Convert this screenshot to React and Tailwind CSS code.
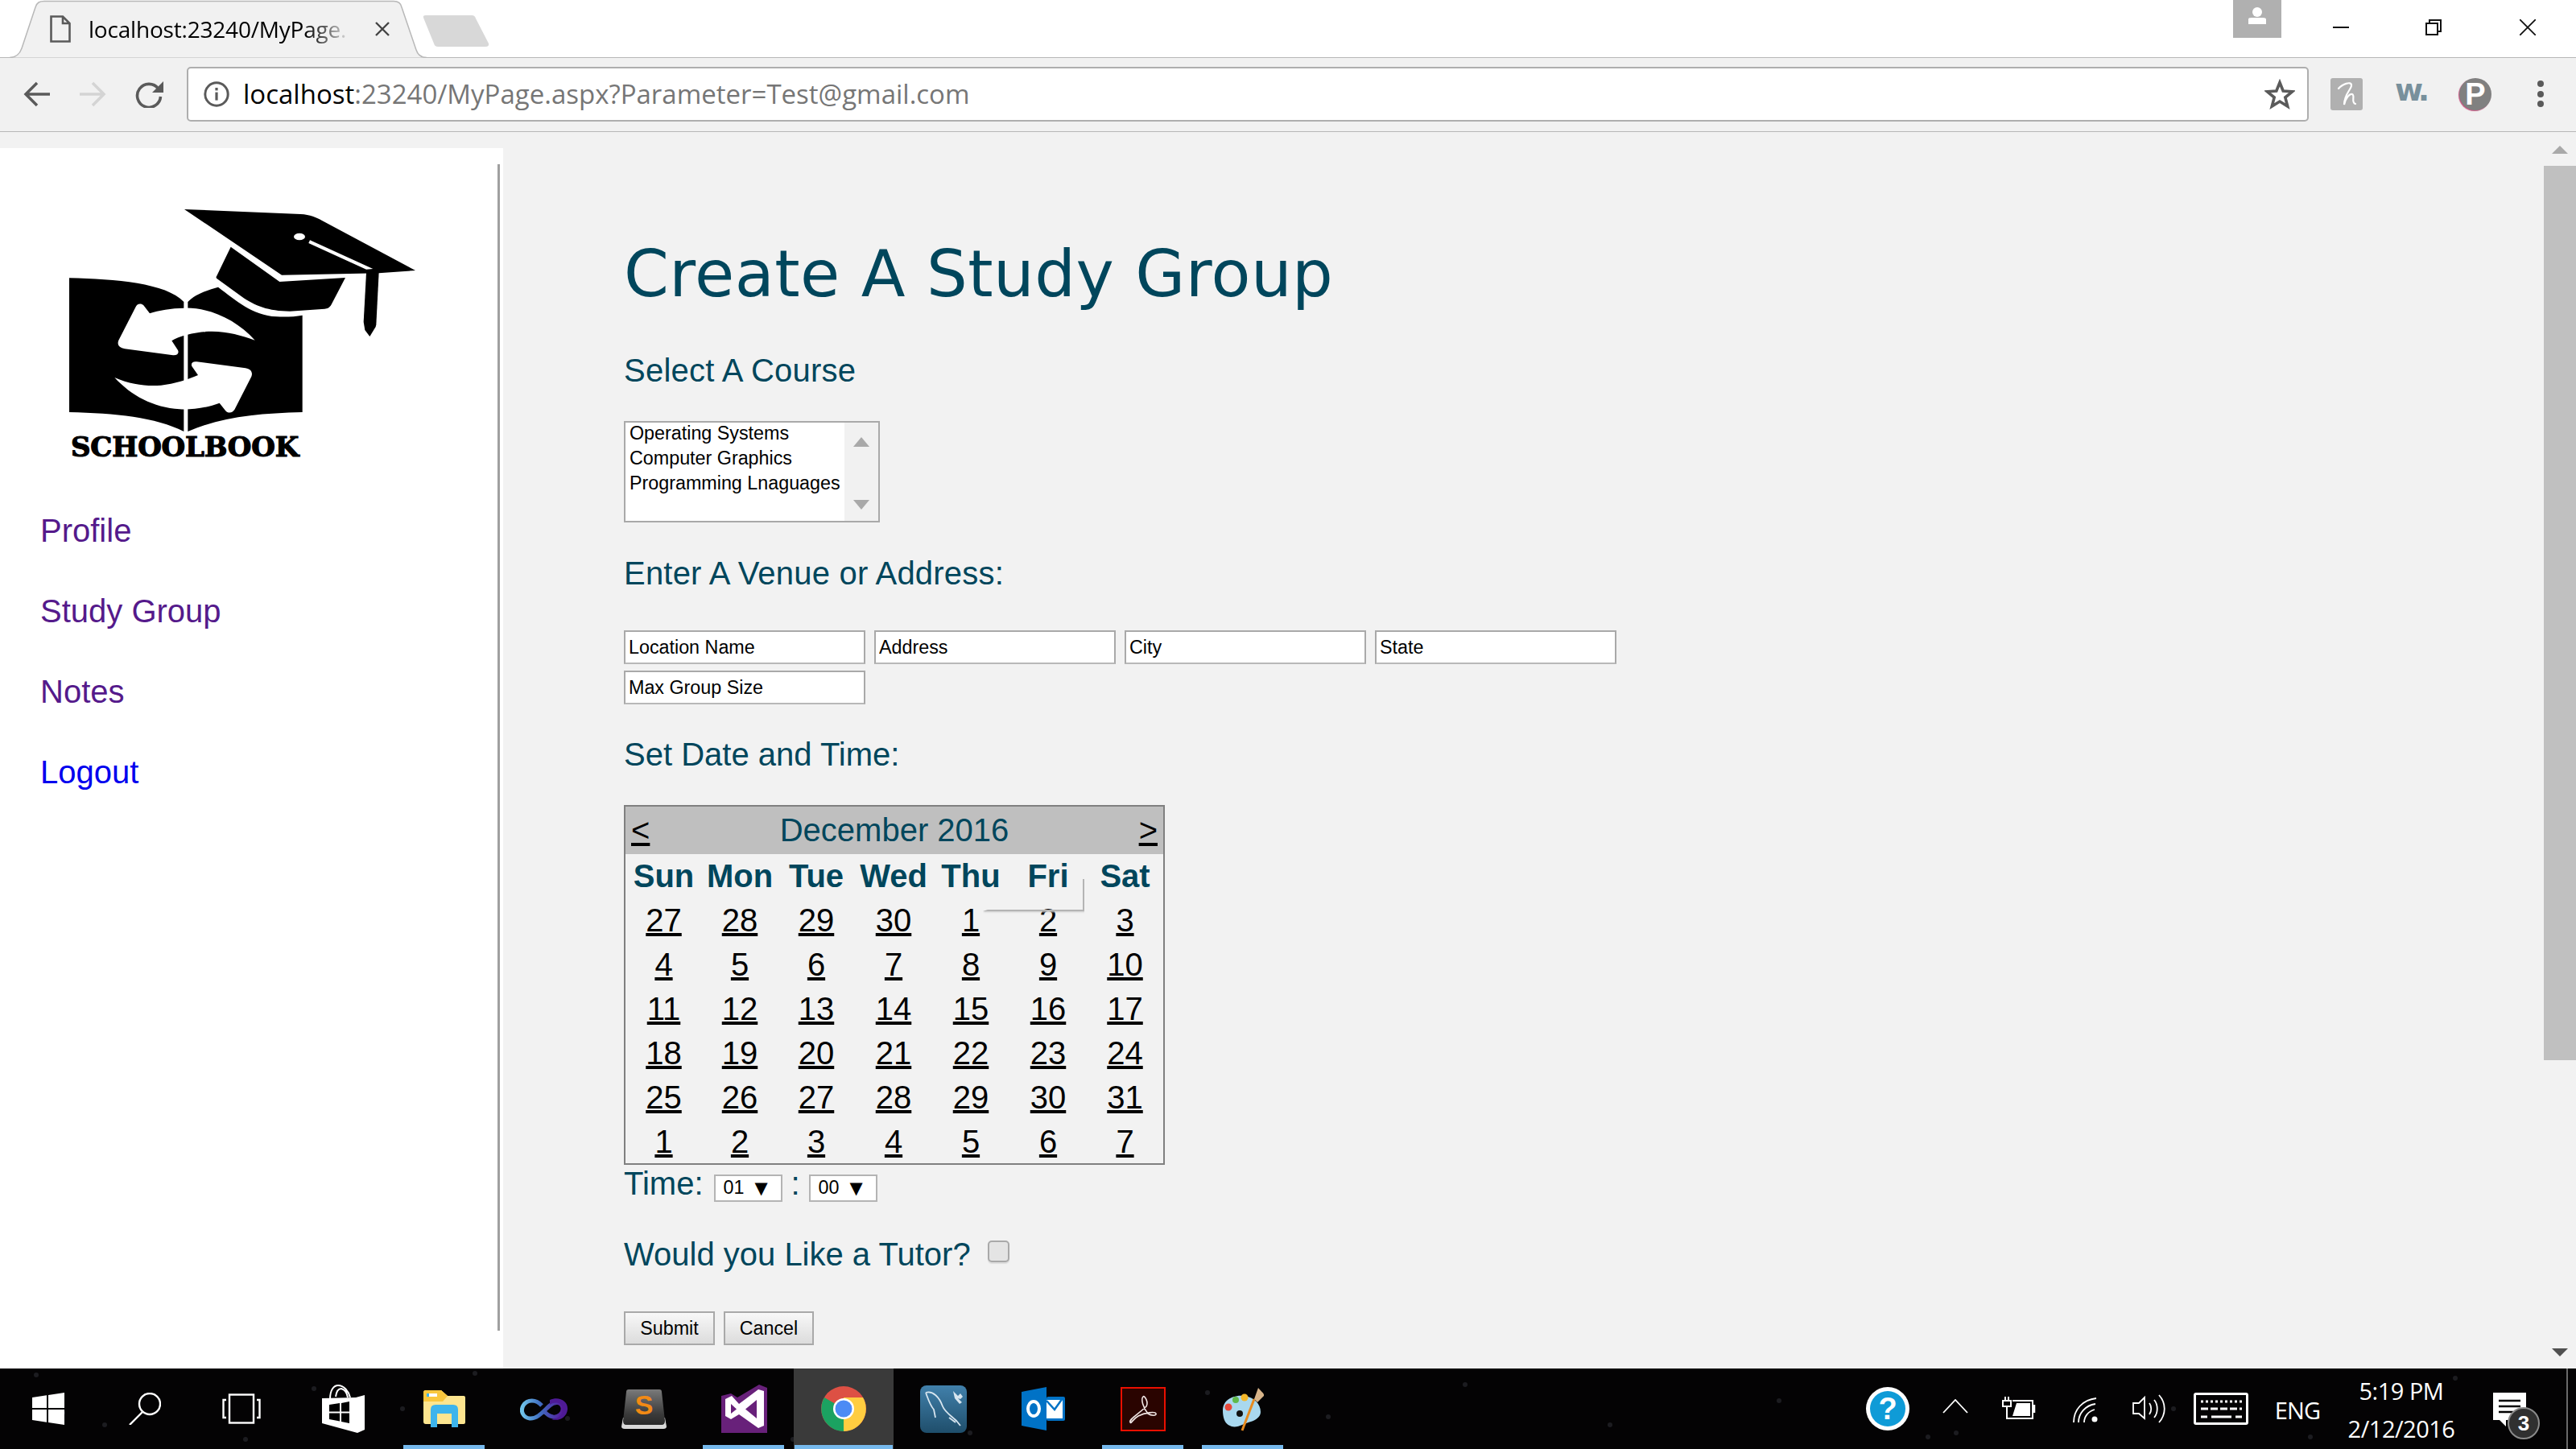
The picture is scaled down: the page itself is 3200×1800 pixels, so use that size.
const TEAL = "text-[#00465c]";

function TabShape() {
  return (
    <svg className="absolute left-0 top-0" width="518" height="72" viewBox="0 0 518 72">
      <path d="M0 71.5 C8 71.5 13 66 15 60 L32 9 C34 3 37 1.5 43 1.5 L477 1.5 C483 1.5 486 4 487 9 L505 62 C507 68 511 71.5 518 71.5" fill="#f1f1f1" stroke="#b8b8b8" strokeWidth="1.5" />
    </svg>
  );
}

function Logo() {
  return (
    <svg width="480" height="300" viewBox="0 0 1440 900" className="block">
      <path d="M78 316 C250 320 440 335 505 405 L505 888 C400 835 250 820 78 816 Z" fill="#000" />
      <path d="M520 405 C545 378 590 362 633 350 C700 400 760 455 850 460 C885 462 920 460 947 455 L947 816 C780 820 640 835 520 888 Z" fill="#000" />
      <path d="M770 548 C700 470 600 425 505 428 C460 428 410 437 378 448 L355 418 C345 408 330 412 325 425 L262 548 C255 565 265 577 285 580 L465 604 C482 605 488 595 483 585 L460 550 C490 530 560 515 610 515 C670 515 720 530 770 548 Z" fill="#fff" />
      <path d="M247 687 C310 715 370 720 420 716 C470 710 520 695 558 678 L535 645 C530 632 540 626 553 628 L735 652 C755 655 763 668 757 683 L695 805 C687 820 670 822 660 810 L638 782 C590 800 530 808 490 805 C390 798 310 755 247 687 Z" fill="#fff" />
      <path d="M507 60 L940 78 C975 80 1000 90 1020 102 L1368 288 L1232 298 L870 305 Z" fill="#000" />
      <ellipse cx="936" cy="162" rx="21" ry="13" fill="#fff" />
      <path d="M975 175 L1210 282 L1185 284 L970 186 Z" fill="#fff" />
      <path d="M1185 296 L1232 294 L1222 490 L1220 498 L1198 534 L1180 510 L1175 480 Z" fill="#000" />
      <path d="M680 200 L862 330 L1107 315 L1055 415 C1048 428 1040 430 1030 431 L900 440 C820 440 770 420 720 385 L628 318 C625 315 625 312 627 310 Z" fill="#000" />
    </svg>
  );
}

function Back({ color }) {
  return (
    <svg width="34" height="32" viewBox="0 0 34 32" fill="none" stroke={color} strokeWidth="3.5">
      <path d="M33 16 H4 M17 2 L3 16 L17 30" />
    </svg>
  );
}

function Forward({ color }) {
  return (
    <svg width="34" height="32" viewBox="0 0 34 32" fill="none" stroke={color} strokeWidth="3.5">
      <path d="M1 16 H30 M17 2 L31 16 L17 30" />
    </svg>
  );
}

function Reload() {
  return (
    <svg width="36" height="34" viewBox="0 0 36 34" fill="none">
      <path d="M28.5 10 A14.5 14.5 0 1 0 31.5 20" stroke="#5a5a5a" strokeWidth="3.6" />
      <path d="M35 1 V15 H21 Z" fill="#5a5a5a" />
    </svg>
  );
}

function Info() {
  return (
    <svg width="32" height="32" viewBox="0 0 32 32" fill="none">
      <circle cx="16" cy="16" r="14.2" stroke="#5a5a5a" strokeWidth="3" />
      <rect x="14.4" y="8" width="3.2" height="3.4" fill="#5a5a5a" />
      <rect x="14.4" y="13.6" width="3.2" height="10" fill="#5a5a5a" />
    </svg>
  );
}

function Star() {
  return (
    <svg width="38" height="38" viewBox="0 0 38 38" fill="none">
      <path d="M19 4.5 L23.2 15 L34.6 15.8 L25.8 23 L28.7 34 L19 28 L9.3 34 L12.2 23 L3.4 15.8 L14.8 15 Z" stroke="#5a5a5a" strokeWidth="3.6" />
    </svg>
  );
}

function Honey() {
  return (
    <svg width="40" height="40" viewBox="0 0 40 40" fill="none">
      <rect width="40" height="40" rx="3" fill="#b0b0b0" />
      <path d="M10 13 C14 8 26 3 26 9 C26 14 17 20 17 33 C19 24 24 19 27 20 C31 22 25 30 31 32" stroke="#fff" strokeWidth="2.2" strokeLinecap="round" />
    </svg>
  );
}

function WinLogo() {
  return (
    <svg width="40" height="40" viewBox="0 0 40 40" fill="#fff">
      <path d="M0 6 L18 3.2 V19 H0 Z M20 3 L40 0 V19 H20 Z M0 21 H18 V36.8 L0 34 Z M20 21 H40 V40 L20 37 Z" />
    </svg>
  );
}

function Search() {
  return (
    <svg width="40" height="40" viewBox="0 0 40 40" fill="none" stroke="#fff" strokeWidth="2.4">
      <ellipse cx="26" cy="14" rx="13" ry="13" />
      <path d="M17 24 L1 40" />
    </svg>
  );
}

function TaskView() {
  return (
    <svg width="48" height="38" viewBox="0 0 48 38" fill="none" stroke="#fff" strokeWidth="2.4">
      <rect x="9" y="1.5" width="30" height="35" />
      <path d="M5 8 H1.5 V30 H5 M43 8 H46.5 V30 H43" />
    </svg>
  );
}

function Store() {
  return (
    <svg width="54" height="60" viewBox="0 0 54 60">
      <path d="M10 18 C10 6 15 1 20 1 C27 1 33 8 35 16 M17 15 C18 8 21 5 24 5 C28 6 31 10 32 16" fill="none" stroke="#fff" strokeWidth="2" />
      <path d="M0 17 L42 16 L53 13 V56 L44 60 L0 48 Z" fill="#fff" />
      <path d="M9 25 L22 23 V33.5 H9 Z M24 23 L34 21 V33.5 H24 Z M9 35.5 H22 V45.5 L9 43 Z M24 35.5 H34 V48 L24 46 Z" fill="#000" />
    </svg>
  );
}

function Explorer() {
  return (
    <svg width="52" height="46" viewBox="0 0 52 46">
      <path d="M0 3 Q0 0 3 0 H22 L30 7 H50 Q52 7 52 9 V40 Q52 42 50 42 H3 Q0 42 0 39 Z" fill="#fde58f" />
      <path d="M0 3 Q0 0 3 0 H22 L30 7 L24 14 H0 Z" fill="#f9c73d" />
      <rect x="4" y="4" width="13" height="4" fill="#fff" />
      <rect x="4" y="4" width="3" height="4" fill="#3db4ec" />
      <path d="M9 46 V24 Q9 18 15 18 H37 Q43 18 43 24 V46 H35 V29 H17 V46 Z" fill="#3db4ec" />
    </svg>
  );
}

function Infinity2() {
  return (
    <svg width="60" height="30" viewBox="0 0 60 30" fill="none">
      <defs>
        <linearGradient id="inf" x1="0" x2="1" y1="0" y2="0">
          <stop offset="0" stopColor="#6fc3ea" />
          <stop offset="0.45" stopColor="#3f6cc0" />
          <stop offset="1" stopColor="#56189a" />
        </linearGradient>
      </defs>
      <path d="M27 11 C20 3 9 3 4 11 C0 18 4 26 12 27 C22 28 30 17 37 11 C44 5 52 7 53 14 C54 21 47 26 41 25 C36 24 33 22 30 18" stroke="url(#inf)" strokeWidth="5" />
      <path d="M37 4 C48 -1 60 5 59 16 C58 26 48 31 39 28 C48 28 54 22 53 14 C52 8 44 5 37 10 Z" fill="#4e1a96" />
    </svg>
  );
}

function Sublime() {
  return (
    <svg width="56" height="50" viewBox="0 0 56 50">
      <defs>
        <linearGradient id="sub" x1="0" x2="0" y1="0" y2="1">
          <stop offset="0" stopColor="#7a7a7a" />
          <stop offset="0.7" stopColor="#3a3a3a" />
          <stop offset="1" stopColor="#2a2a2a" />
        </linearGradient>
      </defs>
      <path d="M2 36 H54 L56 47 Q56 50 52 50 H4 Q0 50 0 47 Z" fill="#d9d9d9" />
      <path d="M6 4 Q6 1 9 1 H47 Q50 1 50 4 L54 40 Q54 45 50 45 H6 Q2 45 2 40 Z" fill="url(#sub)" />
      <text x="28" y="32" textAnchor="middle" fontFamily="Liberation Sans, sans-serif" fontWeight="700" fontSize="34" fill="#f28a14">S</text>
    </svg>
  );
}

function VS() {
  return (
    <svg width="57" height="60" viewBox="0 0 57 60">
      <path d="M0 14 L12 11 L20 16 L47 0 L57 4 V60 H0 Z" fill="#68217a" />
      <path d="M5 18 L13 14 L22 24 L46 6 L53 8 V51 L46 54 L22 37 L12 43 L5 39 Z" fill="#fff" />
      <path d="M12 24 L19 30.5 L12 36 Z M44 19 V42 L30 30.5 Z" fill="#68217a" />
    </svg>
  );
}

function ChromeIcon() {
  return (
    <svg width="56" height="56" viewBox="0 0 56 56">
      <circle cx="28" cy="28" r="28" fill="#dd5044" />
      <path d="M28 28 L4 14 A28 28 0 0 0 28 56 L42 32 Z" fill="#1ba261" />
      <path d="M28 28 L28 56 A28 28 0 0 0 52 14 L28 14 Z" fill="#ffcd40" />
      <circle cx="28" cy="28" r="13" fill="#fff" />
      <circle cx="28" cy="28" r="10.5" fill="#4c8bf5" />
    </svg>
  );
}

function MySql() {
  return (
    <svg width="58" height="59" viewBox="0 0 58 59">
      <defs>
        <linearGradient id="my" x1="0" x2="0" y1="0" y2="1">
          <stop offset="0" stopColor="#4180ab" />
          <stop offset="1" stopColor="#1f4e6b" />
        </linearGradient>
      </defs>
      <rect width="58" height="59" rx="8" fill="url(#my)" />
      <path d="M7 9 C16 6 24 15 28 26 C31 34 42 40 46 45 L50 50 M7 9 C10 17 12 24 17 30 L19 40 M44 46 L36 40" fill="none" stroke="#d7e5ef" strokeWidth="1.8" />
      <path d="M41 7 L47 13 L50 10 L53 14 L50 17 L47 16 L52 21 L49 23 L43 16 Z" fill="#d7e5ef" />
    </svg>
  );
}

function Outlook() {
  return (
    <svg width="54" height="54" viewBox="0 0 54 54">
      <path d="M0 6 L31 0 V54 L0 48 Z" fill="#0072c6" />
      <rect x="31" y="12" width="23" height="30" rx="2" fill="#0072c6" />
      <rect x="31" y="16" width="20" height="23" fill="#fff" />
      <path d="M31 17 L41 28 L51 14" fill="none" stroke="#0072c6" strokeWidth="2.5" />
      <ellipse cx="15" cy="27" rx="7" ry="9" fill="none" stroke="#fff" strokeWidth="4" />
    </svg>
  );
}

function Acrobat() {
  return (
    <svg width="56" height="55" viewBox="0 0 56 55">
      <rect x="1" y="1" width="54" height="53" fill="#2a0400" stroke="#ea0f00" strokeWidth="2" />
      <path d="M12 44 C10 40 22 34 32 24 C35 19 30 10 28 12 C25 15 28 26 34 33 C38 36 45 36 44 33 C43 30 30 32 22 36 C15 40 13 46 12 44 Z" fill="none" stroke="#f0e6e4" strokeWidth="1.6" />
    </svg>
  );
}

function Paint() {
  return (
    <svg width="56" height="56" viewBox="0 0 56 56">
      <path d="M3 30 C3 16 18 10 30 12 C42 14 50 22 50 32 C50 38 44 42 38 44 C30 46 22 52 14 50 C6 48 3 40 3 30 Z" fill="#a9d8ef" />
      <circle cx="10" cy="26" r="4.5" fill="#e8483a" />
      <circle cx="19" cy="17" r="4" fill="#60b94a" />
      <circle cx="30" cy="14" r="4.5" fill="#f3b72a" />
      <circle cx="24" cy="34" r="4" fill="#111" />
      <path d="M27 55 L42 16" stroke="#e78a1f" strokeWidth="3" />
      <path d="M42 16 L47 2 C50 6 55 9 54 12 L46 20 Z" fill="#d8b48a" />
    </svg>
  );
}

function HelpIcon() {
  return (
    <div className="w-[54px] h-[54px] rounded-full bg-white flex items-center justify-center">
      <div className="w-[44px] h-[44px] rounded-full bg-[#0f9bd7] flex items-center justify-center text-white text-[38px] font-bold font-['Liberation_Sans',sans-serif] leading-none">?</div>
    </div>
  );
}

function Caret() {
  return (
    <svg width="32" height="18" viewBox="0 0 32 18" fill="none" stroke="#fff" strokeWidth="1.8">
      <path d="M1 17 L16 1 L31 17" />
    </svg>
  );
}

function Battery() {
  return (
    <svg width="42" height="28" viewBox="0 0 42 28" fill="none" stroke="#fff" strokeWidth="2">
      <path d="M4 0 V5 M8 0 V5" />
      <rect x="1" y="5" width="10" height="7" />
      <path d="M6 12 V17 M6 17 V27 H38 V5 H13" />
      <path d="M18 8 H35 V24 H13 Z" fill="#fff" stroke="none" />
      <path d="M40 10 V20" strokeWidth="2.5" />
    </svg>
  );
}

function Wifi() {
  return (
    <svg width="32" height="32" viewBox="0 0 32 32" fill="none" stroke="#fff" strokeWidth="1.8">
      <path d="M1 31 C1 15 12 3 29 1" />
      <path d="M7 31 C7 20 15 10 28 8" />
      <path d="M14 31 C14 24 19 17 27 15" />
      <circle cx="27" cy="27" r="3.5" fill="#fff" stroke="none" />
    </svg>
  );
}

function Volume() {
  return (
    <svg width="42" height="36" viewBox="0 0 42 36" fill="none" stroke="#fff" strokeWidth="1.8">
      <path d="M1 11 H8 L15 4 V30 L8 24 H1 Z" />
      <path d="M21 11 C24 15 24 21 21 25" />
      <path d="M27 7 C32 13 32 23 27 29" />
      <path d="M33 1 C42 11 42 25 33 35" />
    </svg>
  );
}

function Keyboard() {
  return (
    <svg width="68" height="40" viewBox="0 0 68 40" fill="none" stroke="#fff">
      <rect x="1.5" y="1.5" width="65" height="37" rx="1.5" strokeWidth="3" />
      <path d="M9 11 H60" strokeWidth="3" strokeDasharray="3 3" />
      <path d="M9 20 H60" strokeWidth="3" strokeDasharray="9 3" />
      <path d="M9 30 H17 M22 30 H47 M52 30 H60" strokeWidth="3" />
    </svg>
  );
}

function TaskSlot({ w, bar, active, children }) {
  return (
    <div className={`relative flex items-center justify-center h-full ${w} ${active ? "bg-[#3a3a3a]" : ""}`}>
      {children}
      {bar && <div className={`absolute bottom-0 h-[5px] bg-[#76b9ed] ${active ? "left-[1px] right-[1px]" : "left-[11px] right-[12px]"}`} />}
    </div>
  );
}

function Input({ value }) {
  return (
    <input
      readOnly
      value={value}
      className="w-[300px] h-[42px] bg-white border-2 border-[#a9a9a9] border-b-[#b8b8b8] px-[4px] text-[23.3px] text-black outline-none font-['Liberation_Sans',sans-serif]"
    />
  );
}

function Heading({ children, className }) {
  return (
    <div className={`text-[40px] leading-[46px] h-[46px] ${TEAL} ${className}`}>{children}</div>
  );
}

function Cal() {
  const days = ["Sun", "Mon", "Tue", "Wed", "Thu", "Fri", "Sat"];
  const dates = [27, 28, 29, 30, 1, 2, 3, 4, 5, 6, 7, 8, 9, 10, 11, 12, 13, 14, 15, 16, 17, 18, 19, 20, 21, 22, 23, 24, 25, 26, 27, 28, 29, 30, 31, 1, 2, 3, 4, 5, 6, 7];
  return (
    <div className="relative w-[672px] h-[447px] mt-[40px] border-2 border-[#808080]">
      <div className="flex justify-between items-center h-[59px] bg-[#bfbfbf] px-[7px] text-[40px] leading-[59px]">
        <span className="underline text-black">&lt;</span>
        <span className={TEAL}>December 2016</span>
        <span className="underline text-black">&gt;</span>
      </div>
      <div className="grid grid-cols-[95px_94px_96px_96px_96px_96px_95px]">
        {days.map((d) => (
          <div key={d} className={`h-[55px] leading-[55px] text-center font-bold text-[40px] ${TEAL}`}>{d}</div>
        ))}
        {dates.map((d, i) => (
          <div key={i} className="h-[55px] leading-[55px] text-center text-[40px] text-black">
            <span className="underline">{d}</span>
          </div>
        ))}
      </div>
      <div className="absolute left-[444px] top-[90px] w-[126px] h-[40px] border-r-2 border-b-2 border-[#b4b4b4] [clip-path:polygon(0_100%,95%_0,100%_0,100%_110%,0_110%)] shadow-[1px_1px_2px_#ccc]" />
    </div>
  );
}

function Sel({ v }) {
  return (
    <div className="w-[85px] h-[34px] mt-[12px] bg-white border-2 border-[#b4b4b4] flex items-center pl-[10px] text-[23.3px] leading-none text-black">
      <span className="w-[39px]">{v}</span>
      <span className="text-[21px] font-['DejaVu_Sans',sans-serif]">▼</span>
    </div>
  );
}

export default function App() {
  const seg = "font-['Open_Sans',sans-serif]";
  return (
    <div className="w-[3200px] h-[1800px] flex flex-col overflow-hidden bg-white font-['Liberation_Sans',sans-serif]">
      {/* tab strip */}
      <div className="h-[72px] shrink-0 flex items-start border-b border-[#b8b8b8] bg-white">
        <div className="relative ml-[12px] w-[518px] h-[72px] shrink-0 z-10">
          <TabShape />
          <div className="relative flex items-center h-[72px] pl-[50px]">
            <svg width="26" height="34" viewBox="0 0 26 34" fill="none" stroke="#5a5a5a" strokeWidth="2.6">
              <path d="M1.5 1.5 H16 L24.5 10 V32.5 H1.5 Z M16 1.5 V10 H24.5" />
            </svg>
            <span className={`ml-[22px] w-[326px] whitespace-nowrap text-[28px] tracking-[-0.2px] text-black ${seg} bg-linear-to-r from-black from-[80%] to-[#f1f1f1] bg-clip-text text-transparent`}>localhost:23240/MyPage.</span>
            <svg className="ml-[30px]" width="18" height="18" viewBox="0 0 18 18" stroke="#444" strokeWidth="2.4">
              <path d="M1 1 L17 17 M17 1 L1 17" />
            </svg>
          </div>
        </div>
        <svg className="ml-[-6px] mt-[18px] shrink-0" width="84" height="41" viewBox="0 0 84 41">
          <path d="M2 4 Q1 1 5 1 L62 1 Q66 1 67 5 L83 36 Q84 40 79 40 L20 40 Q16 40 15 36 Z" fill="#d8d8d8" />
        </svg>
        <div className="ml-[2166px] w-[60px] h-[47px] bg-[#b0b0b0] flex justify-center items-start shrink-0 pt-[9px]">
          <svg width="22" height="21" viewBox="0 0 22 21" fill="#fff">
            <circle cx="11" cy="6" r="6" />
            <path d="M0 21 V15 Q0 13 4 13 H18 Q22 13 22 15 V21 Z" />
          </svg>
        </div>
        <svg className="ml-[64px] mt-[33px] shrink-0" width="20" height="2" viewBox="0 0 20 2"><rect width="20" height="2" fill="#111" /></svg>
        <svg className="ml-[95px] mt-[24px] shrink-0" width="20" height="20" viewBox="0 0 20 20" fill="none" stroke="#111" strokeWidth="2">
          <rect x="1" y="5" width="14" height="14" />
          <path d="M5 5 V1 H19 V15 H15" />
        </svg>
        <svg className="ml-[97px] mt-[24px] shrink-0" width="20" height="20" viewBox="0 0 20 20" stroke="#111" strokeWidth="1.8">
          <path d="M0 0 L20 20 M20 0 L0 20" />
        </svg>
      </div>
      {/* toolbar */}
      <div className="h-[92px] shrink-0 bg-[#f1f1f1] border-b border-[#b8b8b8] flex items-center pb-[2px]">
        <div className="ml-[29px]"><Back color="#5a5a5a" /></div>
        <div className="ml-[35px]"><Forward color="#d4d4d4" /></div>
        <div className="ml-[36px]"><Reload /></div>
        <div className="ml-[28px] w-[2636px] h-[68px] shrink-0 bg-white border-2 border-[#aeaeae] rounded-[5px] flex items-center pl-[19px] pr-[15px]">
          <Info />
          <div className={`ml-[17px] text-[33px] whitespace-nowrap ${seg}`}>
            <span className="text-black">localhost</span>
            <span className="text-[#767676]">:23240/MyPage.aspx?Parameter=Test@gmail.com</span>
          </div>
          <div className="ml-auto"><Star /></div>
        </div>
        <div className="ml-[27px] w-[40px] h-[40px]"><Honey /></div>
        <div className="ml-[40px] w-[42px] h-[40px] text-[#78909c] font-bold text-[38px] leading-[30px] font-['DejaVu_Sans',sans-serif] tracking-[-4px] whitespace-nowrap">w.</div>
        <div className="ml-[38px] w-[40px] h-[40px] rounded-full bg-[#808080] shadow-[-1px_1px_1px_#c4527f] flex items-center justify-center text-white font-bold text-[38px] leading-none">P</div>
        <div className="ml-[57px] flex flex-col gap-[4.5px]">
          <div className="w-[8px] h-[8px] rounded-full bg-[#5a5a5a]" />
          <div className="w-[8px] h-[8px] rounded-full bg-[#5a5a5a]" />
          <div className="w-[8px] h-[8px] rounded-full bg-[#5a5a5a]" />
        </div>
      </div>
      {/* body */}
      <div className="h-[1536px] shrink-0 flex bg-[#f2f2f2]">
        <div className="w-[625px] shrink-0 pt-[20px]">
          <div className="h-full bg-white flex">
            <div className="w-[618px]">
              <div className="ml-[60px] mt-[56px]"><Logo /></div>
              <div className="ml-[88px] h-[30px] leading-[30px] text-[34px] font-bold text-black font-['DejaVu_Serif',serif] tracking-[-0.2px] whitespace-nowrap [-webkit-text-stroke:1.2px_#000]">SCHOOLBOOK</div>
              <nav className="ml-[50px] mt-[66px] flex flex-col gap-[54px] text-[40px] leading-[46px]">
                <span className="text-[#551a8b]">Profile</span>
                <span className="text-[#551a8b]">Study Group</span>
                <span className="text-[#551a8b]">Notes</span>
                <span className="text-[#0000ee]">Logout</span>
              </nav>
            </div>
            <div className="w-[3px] mt-[20px] h-[1449px] bg-[#a0a0a0]" />
          </div>
        </div>
        <main className="flex-1 pl-[150px]">
          <h1 className={`mt-[132px] h-[90px] text-[80px] leading-[90px] tracking-[0.5px] font-['DejaVu_Sans',sans-serif] ${TEAL} whitespace-nowrap`}>Create A Study Group</h1>
          <Heading className="mt-[51px] tracking-[0.25px]">Select A Course</Heading>
          <div className="mt-[40px] w-[318px] h-[126px] border-2 border-[#a9a9a9] bg-white flex overflow-hidden">
            <div className="flex-1 pl-[5px] -mt-[2px] text-[23.3px] leading-[31px] whitespace-nowrap text-black">
              <div>Operating Systems</div>
              <div>Computer Graphics</div>
              <div>Programming Lnaguages</div>
            </div>
            <div className="w-[42px] bg-[#f1f1f1] flex flex-col items-center pt-[18px]">
              <svg width="20" height="12" viewBox="0 0 20 12"><path d="M10 0 L20 12 H0 Z" fill="#a9a9a9" /></svg>
              <svg className="mt-[66px]" width="20" height="12" viewBox="0 0 20 12"><path d="M0 0 H20 L10 12 Z" fill="#a9a9a9" /></svg>
            </div>
          </div>
          <Heading className="mt-[40px] tracking-[0.2px]">Enter A Venue or Address:</Heading>
          <div className="mt-[48px] w-[1240px] flex flex-wrap gap-x-[11px] gap-y-[8px]">
            <Input value="Location Name" />
            <Input value="Address" />
            <Input value="City" />
            <Input value="State" />
            <Input value="Max Group Size" />
          </div>
          <Heading className="mt-[39px]">Set Date and Time:</Heading>
          <Cal />
          <div className="flex h-[46px]">
            <span className={`text-[40px] leading-[46px] ${TEAL}`}>Time:</span>
            <div className="ml-[13px]"><Sel v="01" /></div>
            <span className={`w-[33px] text-center text-[40px] leading-[46px] ${TEAL}`}>:</span>
            <Sel v="00" />
          </div>
          <div className="mt-[42px] flex h-[46px] items-center">
            <span className={`text-[40px] leading-[46px] ${TEAL}`}>Would you Like a Tutor?</span>
            <input type="checkbox" readOnly className="appearance-none ml-[21px] mb-[8px] w-[27px] h-[27px] rounded-[5px] bg-[#e4e4e4] border-2 border-[#a9a9a9] shadow-[0_2px_1px_#dcdcdc]" />
          </div>
          <div className="mt-[48px] flex gap-[11px]">
            <button className="w-[113px] h-[42px] border-2 border-[#a9a9a9] bg-linear-to-b from-[#f8f8f8] to-[#dcdcdc] text-[23.3px] text-black">Submit</button>
            <button className="w-[112px] h-[42px] border-2 border-[#a9a9a9] bg-linear-to-b from-[#f8f8f8] to-[#dcdcdc] text-[23.3px] text-black">Cancel</button>
          </div>
        </main>
        <div className="w-[40px] shrink-0 flex flex-col items-center pt-[17px]">
          <svg width="20" height="10" viewBox="0 0 20 10"><path d="M10 0 L20 10 H0 Z" fill="#a9a9a9" /></svg>
          <div className="mt-[15px] w-[40px] h-[1111px] bg-[#c0c0c0]" />
          <svg className="mt-[358px]" width="20" height="10" viewBox="0 0 20 10"><path d="M0 0 H20 L10 10 Z" fill="#505050" /></svg>
        </div>
      </div>
      {/* taskbar */}
      <div className="relative h-[100px] shrink-0 bg-[#040304] flex text-white">
        <svg className="absolute inset-0" width="3200" height="100" viewBox="0 0 3200 100">
          {[[45, 8], [78, 55], [130, 70], [305, 88], [390, 25], [500, 50], [590, 6], [705, 62], [985, 88], [1205, 80], [1500, 30], [1650, 60], [1820, 20], [2000, 70], [2210, 40], [2395, 85], [2430, 80], [2700, 50], [2870, 85], [3050, 12]].map(([x, y], i) => (
            <circle key={i} cx={x} cy={y} r="3" fill="#1c1c20" />
          ))}
        </svg>
        <TaskSlot w="w-[120px]"><WinLogo /></TaskSlot>
        <TaskSlot w="w-[120px]"><Search /></TaskSlot>
        <TaskSlot w="w-[120px]"><TaskView /></TaskSlot>
        <TaskSlot w="w-[130px] pl-[4px]"><Store /></TaskSlot>
        <TaskSlot w="w-[124px]" bar><Explorer /></TaskSlot>
        <TaskSlot w="w-[124px]"><Infinity2 /></TaskSlot>
        <TaskSlot w="w-[124px]"><Sublime /></TaskSlot>
        <TaskSlot w="w-[124px]" bar><VS /></TaskSlot>
        <TaskSlot w="w-[124px]" bar active><ChromeIcon /></TaskSlot>
        <TaskSlot w="w-[124px]"><MySql /></TaskSlot>
        <TaskSlot w="w-[124px]"><Outlook /></TaskSlot>
        <TaskSlot w="w-[124px]" bar><Acrobat /></TaskSlot>
        <TaskSlot w="w-[124px]" bar><Paint /></TaskSlot>
        <div className="w-[704px]" />
        <TaskSlot w="w-[70px]"><HelpIcon /></TaskSlot>
        <div className="w-[98px] flex justify-center items-start pt-[38px]"><Caret /></div>
        <div className="w-[60px] flex justify-center items-start pt-[35px]"><Battery /></div>
        <div className="w-[106px] flex justify-center items-start pt-[36px]"><Wifi /></div>
        <div className="w-[52px] flex justify-center items-start pt-[32px]"><Volume /></div>
        <div className="w-[126px] flex justify-center items-start pt-[30px]"><Keyboard /></div>
        <div className={`w-[64px] text-center text-[29px] leading-[104px] ${seg} tracking-[-0.8px]`}>ENG</div>
        <div className={`w-[194px] flex flex-col items-center text-[29px] ${seg} tracking-[-0.5px] pt-[9px] gap-[9px] leading-[38px]`}>
          <span>5:19 PM</span>
          <span>2/12/2016</span>
        </div>
        <div className="relative w-[108px]">
          <svg className="ml-[17px] mt-[30px]" width="41" height="42" viewBox="0 0 41 42">
            <path d="M0 0 H41 V34 H16 L16 42 L8 34 H0 Z" fill="#fff" />
            <path d="M7 10 H34 M7 17 H34 M7 24 H25" stroke="#000" strokeWidth="2.4" />
          </svg>
          <div className="absolute left-[35px] top-[48px] w-[40px] h-[40px] rounded-full bg-[#303030] border-2 border-[#8a8a8a] flex items-center justify-center text-[26px] font-bold leading-none">3</div>
        </div>
        <div className="w-[2px] bg-[#6a6a6a]" />
      </div>
    </div>
  );
}
